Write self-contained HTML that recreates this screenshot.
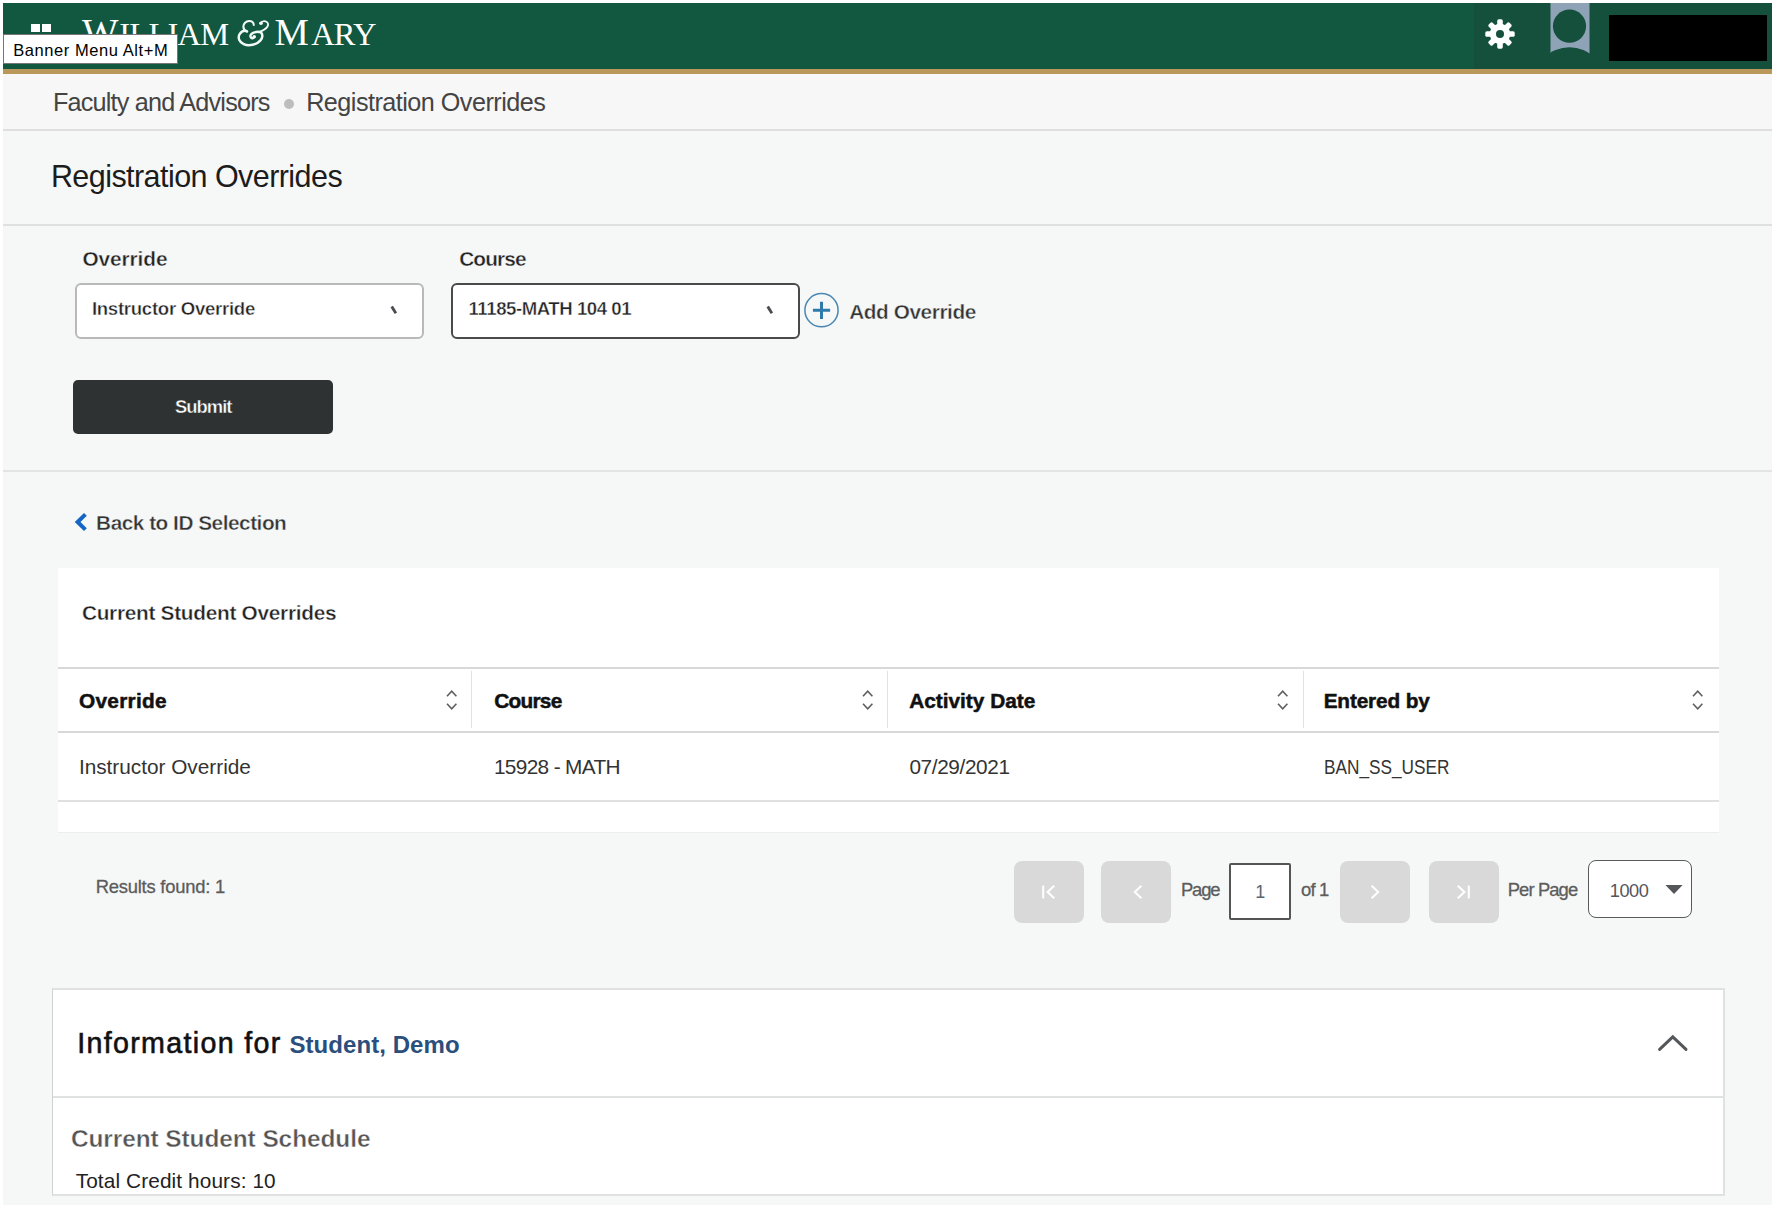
<!DOCTYPE html>
<html lang="en">
<head>
<meta charset="utf-8">
<title>Registration Overrides</title>
<style>
html,body{margin:0;padding:0;}
body{width:1778px;height:1210px;background:#fff;position:relative;overflow:hidden;font-family:"Liberation Sans",sans-serif;}
.a{position:absolute;box-sizing:border-box;}
.t{position:absolute;white-space:nowrap;line-height:1;}
#app{left:3px;top:3px;width:1769px;height:1202px;background:#f6f8f7;}
#hdr{left:3px;top:3px;width:1769px;height:66px;background:#125740;}
#hdrR{left:1474px;top:3px;width:298px;height:66px;background:#14503c;}
#gold{left:3px;top:69px;width:1769px;height:5px;background:#ba985c;}
#bcbar{left:3px;top:74px;width:1769px;height:56px;background:#f7f7f7;}
.sq{background:#fff;width:9px;height:8px;}
#tipbox{left:3px;top:34px;width:175px;height:30px;background:#fff;border:1px solid #767676;z-index:5;}
#tip{z-index:6;}
#black{left:1609px;top:15px;width:158px;height:46px;background:#000;}
.hr{left:3px;width:1769px;height:2px;background:#dfe0e0;}
.sel{background:#fff;border-radius:5px;}
#submit{left:73.3px;top:379.5px;width:260px;height:54px;background:#2f3233;border-radius:5px;}
#panel{left:58px;top:568px;width:1661px;height:265px;background:#fff;border-bottom:1px solid #ededed;}
.pbtn{background:#d9d9d9;border-radius:8px;top:860.5px;width:70px;height:62px;}
#card{left:52px;top:988px;width:1673px;height:207.5px;background:#fff;border:2px solid #e0e1e1;border-left:1px solid #d0d1d1;}
.sf{font-family:"Liberation Serif",serif;}

</style>
</head>
<body>
<div id="app" class="a"></div>
<div id="hdr" class="a"></div>
<div id="hdrR" class="a"></div>
<div id="gold" class="a"></div>
<div id="bcbar" class="a"></div>
<!-- grid icon -->
<div class="a sq" style="left:30.5px;top:23.5px"></div>
<div class="a sq" style="left:41.5px;top:23.5px"></div>
<div class="a sq" style="left:30.5px;top:33.5px"></div>
<div class="a sq" style="left:41.5px;top:33.5px"></div>
<!-- logo -->
<svg class="a" style="left:228px;top:12px" width="56" height="42" viewBox="0 0 1613 1210"><g fill="none" stroke="#f1faf5" stroke-width="60" stroke-linecap="round">
<path d="M742 372 C745 300 685 255 610 258 C515 261 442 335 442 425 C442 485 478 530 548 560"/>
<path d="M548 560 C470 525 385 560 335 640 C275 740 322 868 452 926 C600 992 830 945 935 818 C1005 740 1005 640 948 592 C900 562 790 572 722 602 C655 632 625 690 665 742 C690 768 730 760 750 725" stroke-width="70"/>
<path d="M870 582 C980 552 1088 500 1138 420 C1176 352 1148 284 1080 268 C1022 258 962 282 942 322" stroke-width="54"/>
</g><circle cx="756" cy="715" r="50" fill="#fff"/><circle cx="950" cy="325" r="52" fill="#fff"/></svg>
<div id="tipbox" class="a"></div>
<!-- gear -->
<svg class="a" style="left:1484px;top:18px" width="32" height="32" viewBox="-16 -16 32 32">
<g fill="#fff">
<circle r="10.2"/>
<g id="teeth">
<rect x="-2.8" y="-14.7" width="5.6" height="29.4" rx="1.6"/>
<rect x="-2.8" y="-14.7" width="5.6" height="29.4" rx="1.6" transform="rotate(45)"/>
<rect x="-2.8" y="-14.7" width="5.6" height="29.4" rx="1.6" transform="rotate(90)"/>
<rect x="-2.8" y="-14.7" width="5.6" height="29.4" rx="1.6" transform="rotate(135)"/>
</g>
</g>
<circle r="4" fill="#14503c"/>
</svg>
<!-- avatar -->
<svg class="a" style="left:1550px;top:3px" width="40" height="52" viewBox="0 0 40 52">
<rect x="0.5" y="0" width="39" height="52" fill="#8fa3b6"/>
<circle cx="19.5" cy="23.2" r="16.6" fill="#14503c"/>
<circle cx="19.5" cy="80.5" r="36.2" fill="#14503c"/>
</svg>
<div id="black" class="a"></div>
<!-- breadcrumb bullet -->
<div class="a" style="left:284px;top:99px;width:10px;height:10px;border-radius:50%;background:#bdbdbd"></div>
<div class="a hr" style="top:129px;background:#dfdfdf"></div>
<div class="a hr" style="top:224px;background:#dfe0e0"></div>
<div class="a hr" style="top:470px;background:#e3e4e4"></div>
<!-- selects -->
<div class="a sel" style="left:74.8px;top:283px;width:349px;height:56px;border:2px solid #b9b9b9;border-radius:6px"></div>
<div class="a sel" style="left:450.8px;top:283px;width:349.2px;height:56.3px;border:2px solid #4a4a4a;border-radius:6px"></div>
<svg class="a" style="left:388px;top:304px" width="10" height="12" viewBox="0 0 10 12"><path d="M3.7 2.5 L7.9 9.3" stroke="#4a4a50" stroke-width="2.8" fill="none"/></svg>
<svg class="a" style="left:764px;top:304px" width="10" height="12" viewBox="0 0 10 12"><path d="M3.7 2.5 L7.9 9.3" stroke="#4a4a50" stroke-width="2.8" fill="none"/></svg>
<!-- plus circle -->
<svg class="a" style="left:803px;top:292px" width="38" height="38" viewBox="0 0 38 38"><circle cx="18.5" cy="18.2" r="16.6" fill="none" stroke="#4a88b2" stroke-width="1.5"/><path d="M18.5 9.7 V26.9 M9.9 18.3 H27.1" stroke="#2e7aab" stroke-width="3" fill="none"/></svg>
<div id="submit" class="a"></div>
<!-- back chevron -->
<svg class="a" style="left:72px;top:511px" width="18" height="22" viewBox="0 0 18 22"><path d="M13.4 3.4 L5.6 11 L13.4 18.6" fill="none" stroke="#1565c4" stroke-width="4"/></svg>
<!-- table panel -->
<div id="panel" class="a"></div>
<div class="a" style="left:58px;top:666.5px;width:1661px;height:2px;background:#d8d8d8"></div>
<div class="a" style="left:58px;top:730.5px;width:1661px;height:2px;background:#d8d8d8"></div>
<div class="a" style="left:58px;top:800px;width:1661px;height:2px;background:#e0e0e0"></div>
<div class="a" style="left:471px;top:671px;width:1px;height:57px;background:#e2e2e2"></div>
<div class="a" style="left:887px;top:671px;width:1px;height:57px;background:#e2e2e2"></div>
<div class="a" style="left:1303px;top:671px;width:1px;height:57px;background:#e2e2e2"></div>
<svg class="a srt" style="left:444px;top:688px" width="16" height="24" viewBox="0 0 16 24"><path d="M3 8.2 L7.7 3.2 L12.4 8.2 M3 15.8 L7.7 20.8 L12.4 15.8" fill="none" stroke="#5f5f5f" stroke-width="1.6"/></svg>
<svg class="a srt" style="left:860px;top:688px" width="16" height="24" viewBox="0 0 16 24"><path d="M3 8.2 L7.7 3.2 L12.4 8.2 M3 15.8 L7.7 20.8 L12.4 15.8" fill="none" stroke="#5f5f5f" stroke-width="1.6"/></svg>
<svg class="a srt" style="left:1275px;top:688px" width="16" height="24" viewBox="0 0 16 24"><path d="M3 8.2 L7.7 3.2 L12.4 8.2 M3 15.8 L7.7 20.8 L12.4 15.8" fill="none" stroke="#5f5f5f" stroke-width="1.6"/></svg>
<svg class="a srt" style="left:1690px;top:688px" width="16" height="24" viewBox="0 0 16 24"><path d="M3 8.2 L7.7 3.2 L12.4 8.2 M3 15.8 L7.7 20.8 L12.4 15.8" fill="none" stroke="#5f5f5f" stroke-width="1.6"/></svg>
<!-- pagination -->
<div class="a pbtn" style="left:1014px"></div>
<div class="a pbtn" style="left:1101px"></div>
<div class="a pbtn" style="left:1340px"></div>
<div class="a pbtn" style="left:1429px"></div>
<svg class="a" style="left:1039px;top:882px" width="20" height="20" viewBox="0 0 20 20"><path d="M4.2 3.5 V16.5 M15.2 3.8 L8.6 10 L15.2 16.2" fill="none" stroke="#fff" stroke-width="2"/></svg>
<svg class="a" style="left:1127.5px;top:882px" width="20" height="20" viewBox="0 0 20 20"><path d="M13.4 3.8 L6.8 10 L13.4 16.2" fill="none" stroke="#fff" stroke-width="2"/></svg>
<svg class="a" style="left:1365px;top:882px" width="20" height="20" viewBox="0 0 20 20"><path d="M6.6 3.8 L13.2 10 L6.6 16.2" fill="none" stroke="#fff" stroke-width="2"/></svg>
<svg class="a" style="left:1453px;top:882px" width="20" height="20" viewBox="0 0 20 20"><path d="M15.8 3.5 V16.5 M4.8 3.8 L11.4 10 L4.8 16.2" fill="none" stroke="#fff" stroke-width="2"/></svg>
<div class="a" style="left:1229px;top:863px;width:62px;height:56.5px;background:#fff;border:2px solid #555;border-radius:2px"></div>
<div class="a" style="left:1587.8px;top:860px;width:104px;height:58px;background:#fff;border:1.7px solid #5a5a5a;border-radius:8px"></div>
<svg class="a" style="left:1664px;top:884px" width="20" height="12" viewBox="0 0 20 12"><path d="M1.4 1 H18.6 L10 10 Z" fill="#55565a"/></svg>
<!-- info card -->
<div id="card" class="a"></div>
<div class="a" style="left:53px;top:1096px;width:1670px;height:2px;background:#e0e1e1"></div>
<svg class="a" style="left:1654px;top:1030px" width="38" height="26" viewBox="0 0 38 26"><path d="M5.6 19.4 L18.8 6.8 L32 19.4" fill="none" stroke="#55585a" stroke-width="3" stroke-linecap="round"/></svg>

<div id="lgW" class="t sf" style="left:82.10px;top:13.07px;font-size:38.6px;font-weight:400;color:#fff;">W</div>
<div id="lgI" class="t sf" style="left:119.30px;top:18.18px;font-size:32.5px;font-weight:400;color:#fff;letter-spacing:-0.784px;">ILLIAM</div>
<div id="lgM" class="t sf" style="left:274.40px;top:13.07px;font-size:38.6px;font-weight:400;color:#fff;">M</div>
<div id="lgA" class="t sf" style="left:311.20px;top:18.18px;font-size:32.5px;font-weight:400;color:#fff;letter-spacing:-0.827px;">ARY</div>
<div id="tip" class="t" style="left:13.30px;top:41.53px;font-size:16.5px;font-weight:400;color:#000;letter-spacing:0.560px;">Banner Menu Alt+M</div>
<div id="bc1" class="t" style="left:52.90px;top:89.57px;font-size:25.2px;font-weight:400;color:#444;letter-spacing:-0.784px;">Faculty and Advisors</div>
<div id="bc2" class="t" style="left:306.20px;top:89.57px;font-size:25.2px;font-weight:400;color:#444;letter-spacing:-0.523px;">Registration Overrides</div>
<div id="title" class="t" style="left:50.90px;top:160.98px;font-size:30.5px;font-weight:400;color:#1c1c1c;letter-spacing:-0.556px;">Registration Overrides</div>
<div id="lab1" class="t" style="left:82.40px;top:248.99px;font-size:20.8px;font-weight:700;color:#222;letter-spacing:-0.054px;-webkit-text-stroke:0.4px #f6f8f7;">Override</div>
<div id="lab2" class="t" style="left:459.20px;top:248.99px;font-size:20.8px;font-weight:700;color:#222;letter-spacing:-0.857px;-webkit-text-stroke:0.4px #f6f8f7;">Course</div>
<div id="sel1" class="t" style="left:91.90px;top:299.86px;font-size:18.6px;font-weight:700;color:#222;letter-spacing:-0.282px;-webkit-text-stroke:0.4px #fff;">Instructor Override</div>
<div id="sel2" class="t" style="left:468.50px;top:299.86px;font-size:18.6px;font-weight:700;color:#222;letter-spacing:-0.448px;-webkit-text-stroke:0.4px #fff;">11185-MATH 104 01</div>
<div id="add" class="t" style="left:849.20px;top:302.19px;font-size:20.8px;font-weight:700;color:#333;letter-spacing:-0.426px;-webkit-text-stroke:0.4px #f6f8f7;">Add Override</div>
<div id="subtxt" class="t" style="left:175.10px;top:397.82px;font-size:18.4px;font-weight:700;color:#fff;letter-spacing:-0.999px;-webkit-text-stroke:0.4px #2f3233;">Submit</div>
<div id="back" class="t" style="left:96.10px;top:512.99px;font-size:20.8px;font-weight:700;color:#333;letter-spacing:-0.486px;-webkit-text-stroke:0.4px #f6f8f7;">Back to ID Selection</div>
<div id="cso" class="t" style="left:81.90px;top:602.99px;font-size:20.8px;font-weight:700;color:#222;letter-spacing:-0.271px;-webkit-text-stroke:0.4px #fff;">Current Student Overrides</div>
<div id="th1" class="t" style="left:79.05px;top:691.29px;font-size:20.8px;font-weight:700;color:#111;letter-spacing:0.289px;-webkit-text-stroke:0.5px currentColor;">Override</div>
<div id="th2" class="t" style="left:494.15px;top:691.29px;font-size:20.8px;font-weight:700;color:#111;letter-spacing:-0.697px;-webkit-text-stroke:0.5px currentColor;">Course</div>
<div id="th3" class="t" style="left:909.15px;top:691.29px;font-size:20.8px;font-weight:700;color:#111;letter-spacing:0.016px;-webkit-text-stroke:0.5px currentColor;">Activity Date</div>
<div id="th4" class="t" style="left:1323.65px;top:691.29px;font-size:20.8px;font-weight:700;color:#111;letter-spacing:-0.146px;-webkit-text-stroke:0.5px currentColor;">Entered by</div>
<div id="td1" class="t" style="left:78.90px;top:756.79px;font-size:20.8px;font-weight:400;color:#333;letter-spacing:-0.013px;">Instructor Override</div>
<div id="td2" class="t" style="left:493.90px;top:756.99px;font-size:20.8px;font-weight:400;color:#333;letter-spacing:-0.643px;">15928 - MATH</div>
<div id="td3" class="t" style="left:909.40px;top:756.99px;font-size:20.8px;font-weight:400;color:#333;letter-spacing:-0.380px;">07/29/2021</div>
<div id="td4" class="t" style="left:1324.07px;top:756.99px;font-size:20.8px;font-weight:400;color:#333;transform:scaleX(0.8285);transform-origin:0 0;">BAN_SS_USER</div>
<div id="res" class="t" style="left:95.75px;top:877.72px;font-size:18.4px;font-weight:400;color:#5c5c5c;letter-spacing:-0.232px;-webkit-text-stroke:0.3px currentColor;">Results found: 1</div>
<div id="page" class="t" style="left:1181.05px;top:881.32px;font-size:18.4px;font-weight:400;color:#5c5c5c;letter-spacing:-1.207px;-webkit-text-stroke:0.3px currentColor;">Page</div>
<div id="pg1" class="t" style="left:1255.20px;top:882.76px;font-size:18.0px;font-weight:400;color:#5b6570;">1</div>
<div id="of1" class="t" style="left:1301.05px;top:881.32px;font-size:18.4px;font-weight:400;color:#5c5c5c;letter-spacing:-0.816px;-webkit-text-stroke:0.3px currentColor;">of 1</div>
<div id="pp" class="t" style="left:1507.75px;top:881.32px;font-size:18.4px;font-weight:400;color:#5c5c5c;letter-spacing:-0.893px;-webkit-text-stroke:0.3px currentColor;">Per Page</div>
<div id="k1000" class="t" style="left:1609.70px;top:881.59px;font-size:18.2px;font-weight:400;color:#55565c;letter-spacing:-0.415px;">1000</div>
<div id="info" class="t" style="left:77.20px;top:1028.69px;font-size:28.6px;font-weight:400;color:#111;letter-spacing:1.334px;-webkit-text-stroke:0.6px currentColor;">Information for</div>
<div id="stud" class="t" style="left:289.40px;top:1032.88px;font-size:24.0px;font-weight:700;color:#2b4f7c;letter-spacing:0.069px;">Student, Demo</div>
<div id="sched" class="t" style="left:70.90px;top:1126.55px;font-size:24.4px;font-weight:700;color:#555;letter-spacing:-0.056px;-webkit-text-stroke:0.4px #fff;">Current Student Schedule</div>
<div id="tot" class="t" style="left:75.70px;top:1171.19px;font-size:20.8px;font-weight:400;color:#222;letter-spacing:0.109px;">Total Credit hours: 10</div>
</body>
</html>
